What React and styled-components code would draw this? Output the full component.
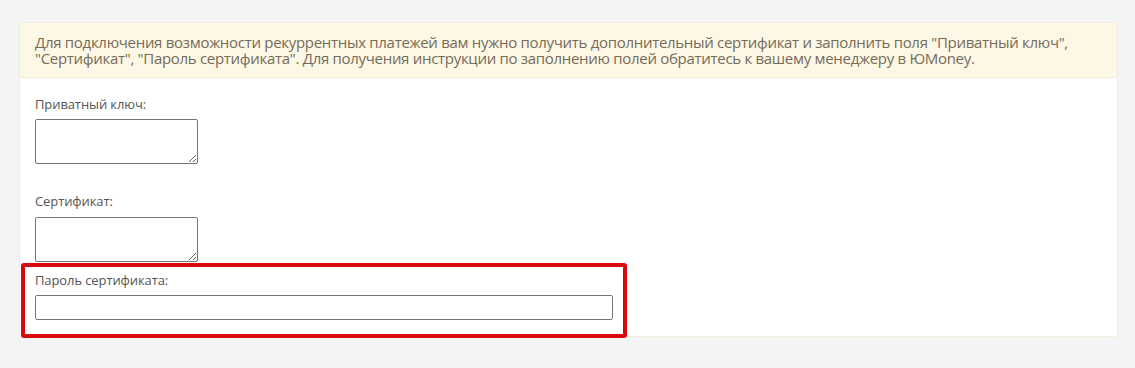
import React from "react";
import styled, { createGlobalStyle } from "styled-components";

const Global = createGlobalStyle`
  html, body { margin: 0; padding: 0; background: #f4f4f4; }
  body { font-family: "Open Sans", "Liberation Sans", sans-serif; }
`;

const Page = styled.div`
  padding: 22px 17px 30px 19px;
`;

const Card = styled.div`
  background: #fff;
  border: 1px solid #f3ecdd;
  border-radius: 2px;
`;

const Notice = styled.div`
  background: #fdf8e6;
  border-bottom: 1px solid #f5edd6;
  padding: 11px 15px 11px 15px;
  color: #756b58;
  font-size: 15px;
  line-height: 16px;
  letter-spacing: -0.3px;
`;

const Body = styled.div`
  padding: 18px 15px 16px 15px;
`;

const Field = styled.div`
  position: relative;
  margin-bottom: ${(p) => p.$gap || 0}px;
`;

const Label = styled.div`
  color: #555;
  font-size: 13px;
  line-height: 16px;
  letter-spacing: -0.1px;
  margin-bottom: ${(p) => p.$space || 7}px;
`;

const Area = styled.textarea`
  display: block;
  box-sizing: border-box;
  width: 163px;
  height: 45px;
  margin: 0;
  border: 1px solid #767676;
  border-radius: 2px;
  background: #fff;
  font-family: inherit;
`;

const Input = styled.input`
  display: block;
  box-sizing: border-box;
  width: 578px;
  height: 25px;
  margin: 0;
  border: 1px solid #767676;
  border-radius: 2px;
  background: #fff;
`;

const Highlight = styled.div`
  position: absolute;
  left: -14px;
  top: -9px;
  width: 606px;
  height: 75px;
  box-sizing: border-box;
  border: 4px solid #d7090f;
  border-radius: 3px;
  pointer-events: none;
`;

export default function App() {
  return (
    <>
      <Global />
      <Page>
        <Card>
          <Notice>
            Для подключения возможности рекуррентных платежей вам нужно получить дополнительный сертификат и заполнить поля "Приватный ключ", "Сертификат", "Пароль сертификата". Для получения инструкции по заполнению полей обратитесь к вашему менеджеру в ЮMoney.
          </Notice>
          <Body>
            <Field $gap={29}>
              <Label>Приватный ключ:</Label>
              <Area />
            </Field>
            <Field $gap={10}>
              <Label $space={8}>Сертификат:</Label>
              <Area />
            </Field>
            <Field>
              <Label>Пароль сертификата:</Label>
              <Input type="password" />
              <Highlight />
            </Field>
          </Body>
        </Card>
      </Page>
    </>
  );
}
